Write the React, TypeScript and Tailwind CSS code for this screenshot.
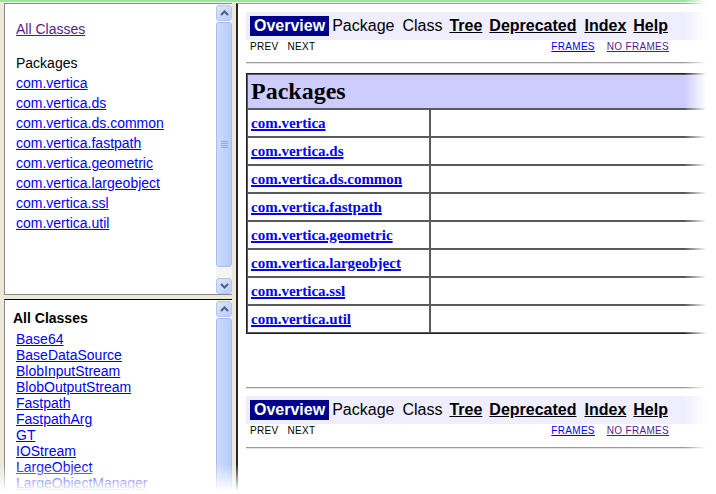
import React from "react";

const PACKAGES = [
  "com.vertica",
  "com.vertica.ds",
  "com.vertica.ds.common",
  "com.vertica.fastpath",
  "com.vertica.geometric",
  "com.vertica.largeobject",
  "com.vertica.ssl",
  "com.vertica.util",
];

const CLASSES = [
  "Base64",
  "BaseDataSource",
  "BlobInputStream",
  "BlobOutputStream",
  "Fastpath",
  "FastpathArg",
  "GT",
  "IOStream",
  "LargeObject",
  "LargeObjectManager",
];

function ArrowButton({ dir }: { dir: "up" | "down" }) {
  return (
    <div className="flex h-[16px] w-[16px] shrink-0 items-center justify-center rounded-[3px] border border-[#b4c7f3] bg-linear-to-br from-[#dbe5fe] to-[#bacdf9]">
      <svg width="9" height="6" viewBox="0 0 9 6">
        <polyline
          points={dir === "up" ? "1,5 4.5,1.5 8,5" : "1,1 4.5,4.5 8,1"}
          fill="none"
          stroke="#4d6185"
          strokeWidth="2"
        />
      </svg>
    </div>
  );
}

function Scrollbar({ thumb, down }: { thumb: number; down: boolean }) {
  return (
    <div className="flex w-[16px] shrink-0 flex-col bg-[#f4f4f0] pt-[1px]">
      <ArrowButton dir="up" />
      <div
        className="mt-[1px] flex shrink-0 items-center justify-center rounded-[3px] border border-[#a9bef0] bg-linear-to-r from-[#cddbfd] to-[#b7cbf8]"
        style={{ height: thumb }}
      >
        {down && (
          <div className="flex flex-col gap-[1px]">
            {[0, 1, 2, 3].map((i) => (
              <div key={i} className="h-[1px] w-[7px] bg-[#8da8e6]" />
            ))}
          </div>
        )}
      </div>
      <div className="flex-1" />
      {down && <ArrowButton dir="down" />}
    </div>
  );
}

function NavBar() {
  return (
    <div>
      <div className="flex h-[28px] items-center bg-[#eeeeff] pl-[4px] text-[16px] leading-[20px] text-black">
        <span className="bg-[#00008b] px-[4px] font-bold text-white">Overview</span>
        <span className="ml-[3px]">Package</span>
        <span className="ml-[8px]">Class</span>
        <a className="ml-[7px] font-bold underline">Tree</a>
        <a className="ml-[7px] font-bold underline">Deprecated</a>
        <a className="ml-[8px] font-bold underline">Index</a>
        <a className="ml-[7px] font-bold underline">Help</a>
      </div>
      <div className="flex h-[14px] w-[423px] items-center pl-[4px] text-[10px] leading-[14px] tracking-[0.3px] text-black">
        <span>PREV</span>
        <span className="ml-[9px]">NEXT</span>
        <a className="ml-auto text-[#0000ff] underline">FRAMES</a>
        <a className="ml-[12px] text-[#551a8b] underline">NO FRAMES</a>
      </div>
    </div>
  );
}

function Rule({ className }: { className: string }) {
  return <div className={`h-[2px] border-t border-b border-t-[#9a9a9a] border-b-[#e4e4e4] ${className}`} />;
}

export default function App() {
  return (
    <div className="relative h-[494px] w-[716px] overflow-hidden bg-[#ece9d8] font-['Liberation_Sans',Arial,sans-serif]">
      <div className="h-[2px] bg-[#9fe39f]" />
      <div className="h-[1px] bg-[#eef6ee]" />

      <div className="flex h-[491px]">
        {/* left frames */}
        <div className="flex w-[236px] shrink-0 flex-col px-[4px]">
          <div className="flex h-[292px] shrink-0 border-y border-l border-[#8a8a8a] bg-white">
            <div className="flex-1 overflow-hidden pl-[11px] pt-[15px] text-[14px] leading-[20px]">
              <a className="text-[#551a8b] underline">All Classes</a>
              <div className="mt-[14px] text-black">Packages</div>
              {PACKAGES.map((p) => (
                <div key={p}>
                  <a className="text-[#0000ff] underline">{p}</a>
                </div>
              ))}
            </div>
            <Scrollbar thumb={245} down />
          </div>

          <div className="h-[4px] shrink-0" />

          <div className="flex flex-1 overflow-hidden border-t border-l border-t-black border-l-[#8a8a8a] bg-white">
            <div className="flex-1 overflow-hidden pt-[9px]">
              <div className="pl-[8px] text-[14px] font-bold leading-[18px] text-black">All Classes</div>
              <div className="mt-[4px] pl-[11px] text-[14px] leading-[16px]">
                {CLASSES.map((c) => (
                  <div key={c}>
                    <a className="text-[#0000ff] underline">{c}</a>
                  </div>
                ))}
              </div>
            </div>
            <Scrollbar thumb={400} down={false} />
          </div>
        </div>

        {/* right frame */}
        <div className="flex-1 overflow-hidden border-t border-l-2 border-t-[#a0a0a0] border-l-[#262626] bg-white pl-[8px] pt-[8px]">
          <NavBar />
          <Rule className="mt-[8px]" />

          <div className="mt-[9px] w-[900px] border border-[#1e1e1e] font-['Liberation_Serif','Times_New_Roman',serif]">
            <div className="flex h-[35px] items-center border border-[#5a5a5a] bg-[#ccccff] pb-[2px] pl-[3px] text-[24px] font-bold text-black">
              Packages
            </div>
            {PACKAGES.map((p) => (
              <div key={p} className="flex h-[28px]">
                <div className="flex w-[183px] items-center border border-[#5a5a5a] pl-[3px]">
                  <a className="text-[15px] font-bold text-[#0000ff] underline decoration-2">{p}</a>
                </div>
                <div className="flex-1 border border-[#5a5a5a]" />
              </div>
            ))}
          </div>

          <Rule className="mt-[53px]" />
          <div className="mt-[7px]">
            <NavBar />
          </div>
          <Rule className="mt-[9px]" />
        </div>
      </div>

      {/* faded screenshot edges */}
      <div className="absolute right-0 top-0 h-full w-[32px] bg-linear-to-r from-white/0 via-white via-70% to-white" />
      <div className="absolute bottom-0 left-0 h-[30px] w-full bg-linear-to-b from-white/0 via-white via-90% to-white" />
    </div>
  );
}
